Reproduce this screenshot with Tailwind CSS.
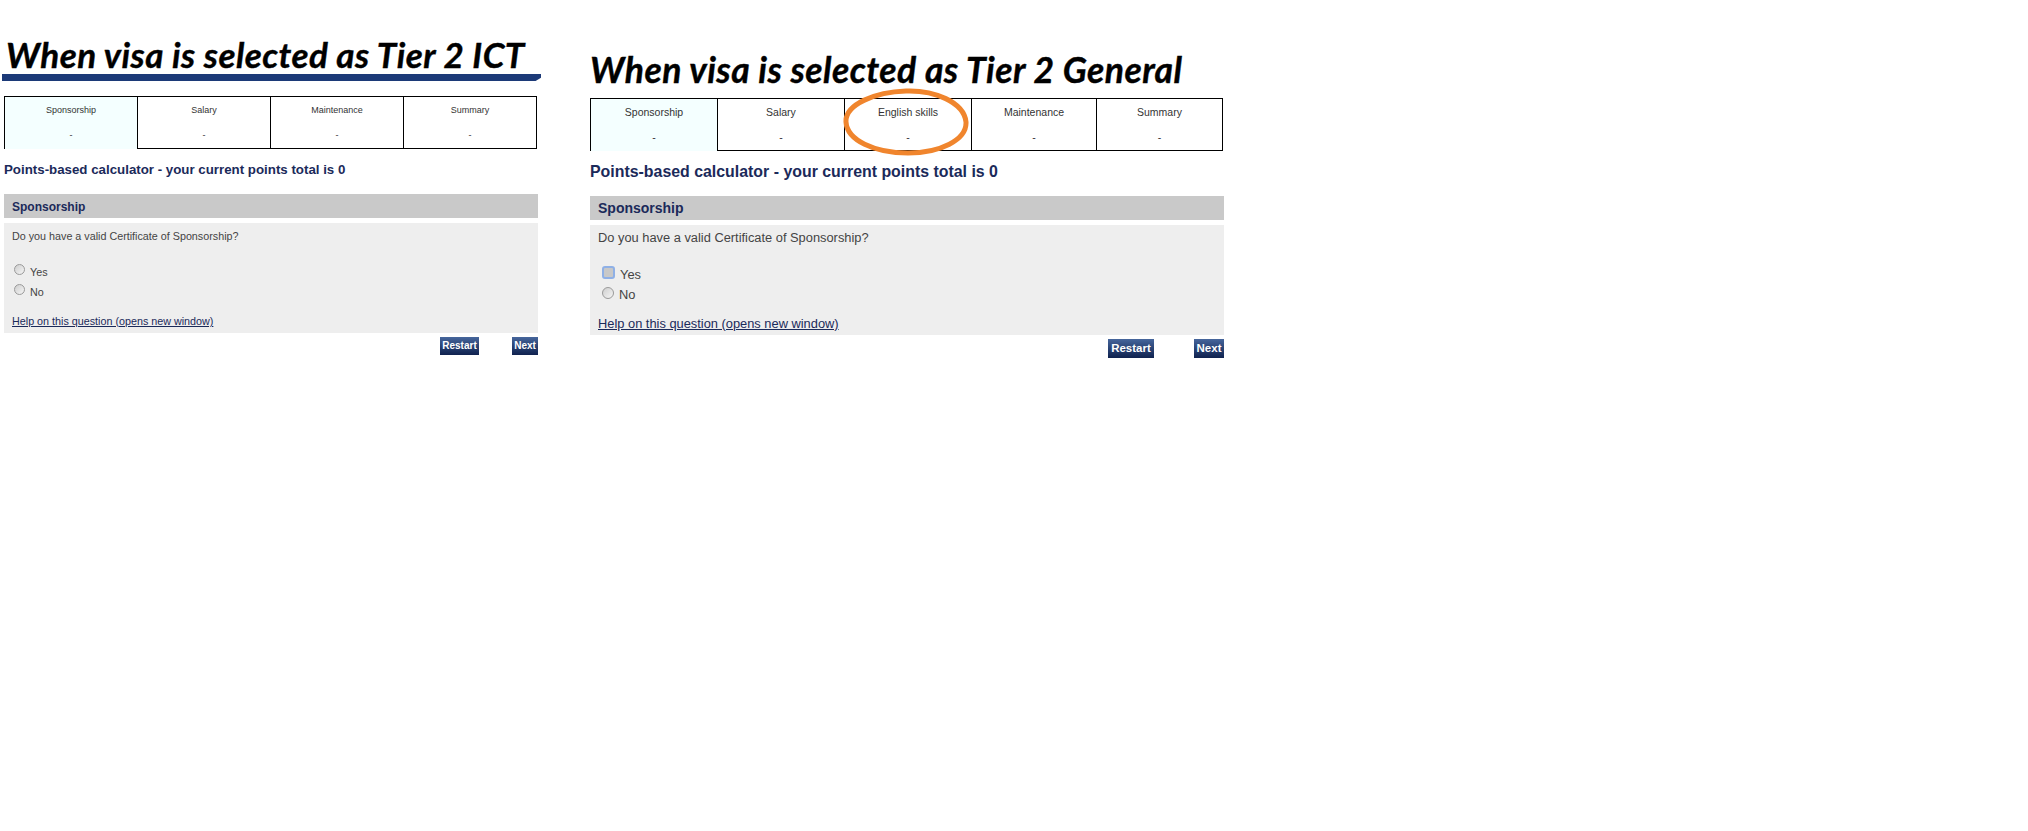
<!DOCTYPE html>
<html lang="en">
<head>
    <meta charset="UTF-8" />
    <title>Tier 2 points calculator</title>
    <script src="https://cdn.jsdelivr.net/npm/@tailwindcss/browser@4"></script>
</head>
<body class="bg-white h-[831px] overflow-hidden font-['Liberation_Sans',Arial,sans-serif]">
    <div class="flex items-start">

        <!-- Tier 2 ICT -->
        <section class="w-[534px] ml-[4px] mt-[34px] shrink-0">
            <h2 class="h-[40px] ml-[2px] text-[35px] leading-[41px] tracking-[0.45px] font-bold italic text-black whitespace-nowrap [-webkit-text-stroke:0.4px_black] font-['Lato',sans-serif]">When visa is selected as Tier 2 ICT</h2>
            <div class="h-[7px] w-[539px] -ml-[2px] bg-[#1c3a78] [clip-path:polygon(0_0,100%_0,100%_55%,99%_100%,0_100%)]"></div>

            <div class="mt-[15px] w-[533px] h-[53px] grid grid-cols-4 border-t border-r border-b border-black text-[9px] leading-[12px] text-[#333]">
                <div class="bg-[#f4ffff] border-l border-black -mb-px pt-[7px] text-center">Sponsorship<p class="mt-[13px]">-</p></div>
                <div class="border-l border-black pt-[7px] text-center">Salary<p class="mt-[13px]">-</p></div>
                <div class="border-l border-black pt-[7px] text-center">Maintenance<p class="mt-[13px]">-</p></div>
                <div class="border-l border-black pt-[7px] text-center">Summary<p class="mt-[13px]">-</p></div>
            </div>

            <h3 class="mt-[12px] text-[13.3px] leading-[18px] font-bold text-[#1b2a5a] whitespace-nowrap">Points-based calculator - your current points total is 0</h3>

            <div class="mt-[15px] h-[24px] pl-[8px] bg-[#c9c9c9] text-[12px] leading-[26px] font-bold text-[#1b2a5a]">Sponsorship</div>
            <div class="mt-[5px] h-[110px] pl-[8px] pt-[6px] bg-[#eeeeee] text-[10.75px] leading-[14px] text-[#444]">
                <p>Do you have a valid Certificate of Sponsorship?</p>
                <div class="mt-[19px] flex items-center h-[20px]">
                    <span class="w-[11px] h-[11px] ml-[2px] -mt-[5px] rounded-full border border-[#9a9a9a] bg-gradient-to-br from-[#cfcfcf] to-[#f5f5f5]"></span>
                    <span class="ml-[5px]">Yes</span>
                </div>
                <div class="flex items-center h-[20px]">
                    <span class="w-[11px] h-[11px] ml-[2px] -mt-[5px] rounded-full border border-[#9a9a9a] bg-gradient-to-br from-[#cfcfcf] to-[#f5f5f5]"></span>
                    <span class="ml-[5px]">No</span>
                </div>
                <a class="block mt-[12px] underline text-[#1b2a5a]">Help on this question (opens new window)</a>
            </div>
            <div class="mt-[4px] flex justify-end gap-[33px]">
                <span class="h-[18px] w-[39px] bg-gradient-to-b from-[#46669c] to-[#10224f] text-white text-[10px] leading-[18px] font-bold text-center">Restart</span>
                <span class="h-[18px] w-[26px] bg-gradient-to-b from-[#46669c] to-[#10224f] text-white text-[10px] leading-[18px] font-bold text-center">Next</span>
            </div>
        </section>

        <!-- Tier 2 General -->
        <section class="w-[634px] ml-[52px] mt-[49px] shrink-0 relative">
            <h2 class="h-[41px] text-[35.5px] leading-[42px] tracking-[0.45px] font-bold italic text-black whitespace-nowrap [-webkit-text-stroke:0.4px_black] font-['Lato',sans-serif]">When visa is selected as Tier 2 General</h2>

            <div class="mt-[8px] w-[633px] h-[53px] grid grid-cols-[127px_127px_127px_125px_1fr] border-t border-r border-b border-black text-[10.5px] leading-[13px] text-[#333]">
                <div class="bg-[#f4ffff] border-l border-black -mb-px pt-[7px] text-center">Sponsorship<p class="mt-[12px]">-</p></div>
                <div class="border-l border-black pt-[7px] text-center">Salary<p class="mt-[12px]">-</p></div>
                <div class="border-l border-black pt-[7px] text-center">English skills<p class="mt-[12px]">-</p></div>
                <div class="border-l border-black pt-[7px] text-center">Maintenance<p class="mt-[12px]">-</p></div>
                <div class="border-l border-black pt-[7px] text-center">Summary<p class="mt-[12px]">-</p></div>
            </div>

            <!-- highlight round the new step -->
            <svg class="absolute left-[252px] top-[39px]" width="130" height="68" viewBox="0 0 130 68" fill="none">
                <path d="M64 3 C92 2 122 14 124 34 C125 52 98 65 66 65 C32 65 5 52 4 34 C3 16 34 4 64 3 Z" stroke="#f0852d" stroke-width="5" />
            </svg>

            <h3 class="mt-[12px] text-[15.9px] leading-[18px] font-bold text-[#1b2a5a] whitespace-nowrap">Points-based calculator - your current points total is 0</h3>

            <div class="mt-[15px] h-[24px] pl-[8px] bg-[#c9c9c9] text-[14px] leading-[24px] font-bold text-[#1b2a5a]">Sponsorship</div>
            <div class="mt-[5px] h-[110px] pl-[8px] pt-[6px] bg-[#eeeeee] text-[12.85px] leading-[14px] text-[#444]">
                <p>Do you have a valid Certificate of Sponsorship?</p>
                <div class="mt-[20px] flex items-center h-[20px]">
                    <span class="w-[13px] h-[13px] ml-[4px] -mt-[5px] rounded-[3px] border-2 border-[#8fb0e6] bg-[#c8c8c8]"></span>
                    <span class="ml-[5px]">Yes</span>
                </div>
                <div class="flex items-center h-[20px]">
                    <span class="w-[12px] h-[12px] ml-[4px] -mt-[5px] rounded-full border border-[#9a9a9a] bg-gradient-to-br from-[#cfcfcf] to-[#f5f5f5]"></span>
                    <span class="ml-[5px]">No</span>
                </div>
                <a class="block mt-[12px] underline text-[#1b2a5a]">Help on this question (opens new window)</a>
            </div>
            <div class="mt-[4px] flex justify-end gap-[40px]">
                <span class="h-[19px] w-[46px] bg-gradient-to-b from-[#46669c] to-[#10224f] text-white text-[11.5px] leading-[19px] font-bold text-center">Restart</span>
                <span class="h-[19px] w-[30px] bg-gradient-to-b from-[#46669c] to-[#10224f] text-white text-[11.5px] leading-[19px] font-bold text-center">Next</span>
            </div>
        </section>
    </div>
</body>
</html>
